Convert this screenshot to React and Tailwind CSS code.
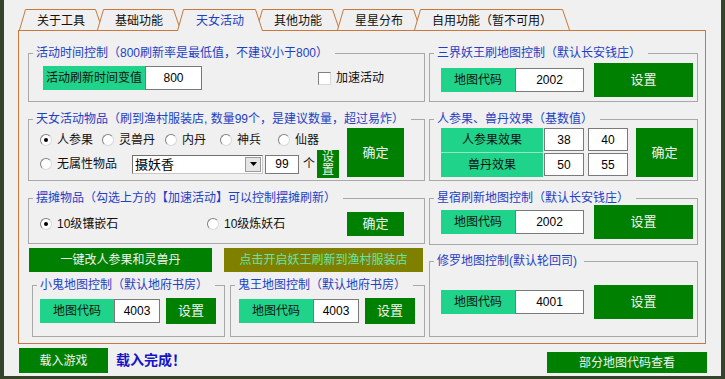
import React from 'react';

const FONT = "font-['Liberation_Sans','Noto_Sans_CJK_SC',sans-serif]";

function Tab({ label, w, className = '', active = false }) {
  const h = active ? 22 : 21;
  const pts = `0.5,${h} 6.5,0.5 ${w - 7.5},0.5 ${w - 0.5},${h}`;
  return (
    <div className={`relative shrink-0 h-[21px] ${active ? 'z-10 text-[#1f3fc4]' : 'text-[#111]'} ${className}`}>
      <svg className="absolute left-0 top-0" width={w} height={h}>
        <polygon points={pts} fill="#f0f0f0" />
        <polyline points={pts} fill="none" stroke="#c8783a" strokeWidth="1" />
      </svg>
      <span className="relative flex h-full items-center justify-center pt-[2px] text-[12px] leading-none">{label}</span>
    </div>
  );
}

function Group({ title, className = '', children }) {
  return (
    <fieldset className={`shrink-0 border border-[#a8a8a8] ${className}`}>
      <legend className="ml-[4px] pl-[3px] pr-[7px] text-[12px] leading-[14px] text-[#1f3fc4] whitespace-nowrap">
        {title}
      </legend>
      {children}
    </fieldset>
  );
}

function Label({ className = '', children }) {
  return (
    <div className={`shrink-0 h-[24px] flex items-center justify-center bg-[#1fd38a] text-[12px] text-[#111] ${className}`}>
      {children}
    </div>
  );
}

function Field({ value, className = '' }) {
  return (
    <input
      readOnly
      value={value}
      className={`shrink-0 border border-[#7a7a7a] bg-white text-center text-[12px] text-black outline-none ${className}`}
    />
  );
}

function Btn({ className = '', children }) {
  return (
    <button className={`shrink-0 flex items-center justify-center bg-[#008000] text-[#f2f2f2] ${className}`}>
      {children}
    </button>
  );
}

function Radio({ checked = false }) {
  return (
    <span className="shrink-0 w-[12px] h-[12px] rounded-full border border-t-[#808080] border-l-[#808080] border-r-[#d8d8d8] border-b-[#d8d8d8] bg-white flex items-center justify-center">
      {checked && <span className="w-[4px] h-[4px] rounded-full bg-black" />}
    </span>
  );
}

function Opt({ className = '', checked = false, children }) {
  return (
    <label className={`shrink-0 flex items-center gap-[5px] text-[12px] text-[#111] ${className}`}>
      <Radio checked={checked} />
      <span>{children}</span>
    </label>
  );
}

function MapRow({ value, className = '' }) {
  return (
    <div className={`flex items-center ml-[11px] ${className}`}>
      <Label className="w-[74px]">地图代码</Label>
      <Field value={value} className="w-[69px] h-[24px]" />
      <Btn className="ml-[10px] w-[99px] h-[34px] text-[13px]">设置</Btn>
    </div>
  );
}

export default function App() {
  return (
    <div className={`w-[725px] h-[379px] overflow-hidden flex bg-[#34432a] ${FONT}`}>
      <div className="ml-[4px] w-[717px] h-[376px] bg-[#f0f0f0] pt-[9px] flex flex-col">
        {/* tabs */}
        <div className="flex h-[21px] ml-[15px]">
          <Tab label="关于工具" w={84} className="w-[84px]" />
          <Tab label="基础功能" w={84} className="w-[84px] -ml-[6px]" />
          <Tab label="天女活动" w={86} className="w-[86px] -ml-[4px]" active />
          <Tab label="其他功能" w={84} className="w-[84px] -ml-[7px]" />
          <Tab label="星星分布" w={84} className="w-[84px] -ml-[3px]" />
          <Tab label="自用功能（暂不可用）" w={156} className="w-[156px] -ml-[7px]" />
        </div>

        {/* panel */}
        <div className="ml-[14px] w-[688px] h-[314px] border border-[#c8783a] flex gap-[4px] pl-[9px] pt-[15px]">
          {/* left column */}
          <div className="w-[397px] flex flex-col">
            <Group title="活动时间控制（800刷新率是最低值，不建议小于800）" className="h-[56px]">
              <div className="flex items-center ml-[14px] mt-[6px]">
                <Label className="w-[102px]">活动刷新时间变值</Label>
                <Field value="800" className="w-[57px] h-[24px]" />
                <span className="ml-[116px] w-[13px] h-[13px] border border-t-[#808080] border-l-[#808080] border-r-[#d8d8d8] border-b-[#d8d8d8] bg-white" />
                <span className="ml-[5px] text-[12px] text-[#111]">加速活动</span>
              </div>
            </Group>

            <Group title="天女活动物品（刷到渔村服装店, 数量99个，是建议数量，超过易炸）" className="mt-[10px] h-[69px]">
              <div className="flex ml-[11px] mt-[2px]">
                <div className="w-[307px] flex flex-col">
                  <div className="h-[24px] flex items-center">
                    <Opt className="w-[62px]" checked>人参果</Opt>
                    <Opt className="w-[63px]">灵兽丹</Opt>
                    <Opt className="w-[55px]">内丹</Opt>
                    <Opt className="w-[58px]">神兵</Opt>
                    <Opt>仙器</Opt>
                  </div>
                  <div className="h-[24px] flex items-center">
                    <Opt className="w-[92px]">无属性物品</Opt>
                    <div className="shrink-0 w-[131px] h-[19px] flex items-center border border-t-[#707070] border-l-[#707070] border-r-[#c8c8c8] border-b-[#c8c8c8] bg-white">
                      <span className="pl-[2px] text-[13px] leading-none text-black">摄妖香</span>
                      <span className="ml-auto mr-[1px] w-[16px] h-[15px] flex items-center justify-center bg-[#e6e6e6] border border-[#9a9a9a]">
                        <svg width="7" height="4" viewBox="0 0 7 4">
                          <polygon points="0,0 7,0 3.5,4" fill="#000" />
                        </svg>
                      </span>
                    </div>
                    <Field value="99" className="ml-[2px] w-[34px] h-[19px]" />
                    <span className="ml-[4px] text-[12px] text-[#111]">个</span>
                    <Btn className="ml-[2px] w-[22px] h-[28px] flex-col text-[12px] leading-[13px] overflow-hidden">
                      <span>设</span>
                      <span>置</span>
                    </Btn>
                  </div>
                </div>
                <Btn className="w-[57px] h-[49px] text-[13px]">确定</Btn>
              </div>
            </Group>

            <Group title="摆摊物品（勾选上方的【加速活动】可以控制摆摊刷新）" className="mt-[10px] h-[53px]">
              <div className="flex items-center ml-[11px] mt-[7px] h-[24px]">
                <Opt className="w-[167px]" checked>10级镶嵌石</Opt>
                <Opt className="w-[140px]">10级炼妖石</Opt>
                <Btn className="w-[57px] h-[24px] text-[13px]">确定</Btn>
              </div>
            </Group>

            <div className="mt-[4px] flex h-[24px]">
              <Btn className="ml-[1px] w-[183px] h-[24px] text-[12px]">一键改人参果和灵兽丹</Btn>
              <button className="ml-[12px] w-[199px] h-[24px] flex items-center justify-center bg-[#808000] text-[12px] text-[#5fe6b0]">
                点击开启妖王刷新到渔村服装店
              </button>
            </div>

            <div className="mt-[6px] flex">
              <Group title="小鬼地图控制（默认地府书房）" className="ml-[4px] w-[193px] h-[59px]">
                <div className="flex items-center ml-[7px] mt-[6px] h-[26px]">
                  <Label className="w-[74px]">地图代码</Label>
                  <Field value="4003" className="w-[46px] h-[24px]" />
                  <Btn className="ml-[6px] w-[50px] h-[26px] text-[13px]">设置</Btn>
                </div>
              </Group>
              <Group title="鬼王地图控制（默认地府书房）" className="ml-[5px] w-[195px] h-[59px]">
                <div className="flex items-center ml-[8px] mt-[6px] h-[26px]">
                  <Label className="w-[74px]">地图代码</Label>
                  <Field value="4003" className="w-[46px] h-[24px]" />
                  <Btn className="ml-[6px] w-[50px] h-[26px] text-[13px]">设置</Btn>
                </div>
              </Group>
            </div>
          </div>

          {/* right column */}
          <div className="w-[269px] flex flex-col">
            <Group title="三界妖王刷地图控制（默认长安钱庄）" className="h-[56px]">
              <MapRow value="2002" className="mt-[3px]" />
            </Group>

            <Group title="人参果、兽丹效果（基数值）" className="mt-[10px] h-[69px]">
              <div className="flex ml-[11px] mt-[2px]">
                <div className="w-[102px] flex flex-col bg-[#1fd38a] text-[12px] text-[#111]">
                  <div className="h-[24px] flex items-center justify-center">人参果效果</div>
                  <div className="h-[25px] flex items-center justify-center border-t border-[#8fe9c0]">兽丹效果</div>
                </div>
                <div className="ml-[1px] grid grid-cols-[40px_40px] gap-x-[4px] gap-y-[2px] content-start">
                  <Field value="38" className="w-[40px] h-[23px]" />
                  <Field value="40" className="w-[40px] h-[23px]" />
                  <Field value="50" className="w-[40px] h-[23px]" />
                  <Field value="55" className="w-[40px] h-[23px]" />
                </div>
                <Btn className="ml-[8px] w-[57px] h-[49px] text-[13px]">确定</Btn>
              </div>
            </Group>

            <Group title="星宿刷新地图控制（默认长安钱庄）" className="mt-[10px] h-[54px]">
              <MapRow value="2002" />
            </Group>

            <Group title="修罗地图控制(默认轮回司)" className="mt-[9px] h-[83px]">
              <MapRow value="4001" className="mt-[17px]" />
            </Group>
          </div>
        </div>

        {/* bottom bar */}
        <div className="mt-[4px] ml-[15px] flex h-[25px]">
          <Btn className="w-[89px] h-[25px] text-[12px]">载入游戏</Btn>
          <span className="ml-[8px] self-center text-[14px] font-bold text-[#1414c8]">载入完成！</span>
          <Btn className="ml-auto mr-[14px] self-end w-[160px] h-[21px] text-[12px]">部分地图代码查看</Btn>
        </div>
      </div>
    </div>
  );
}
